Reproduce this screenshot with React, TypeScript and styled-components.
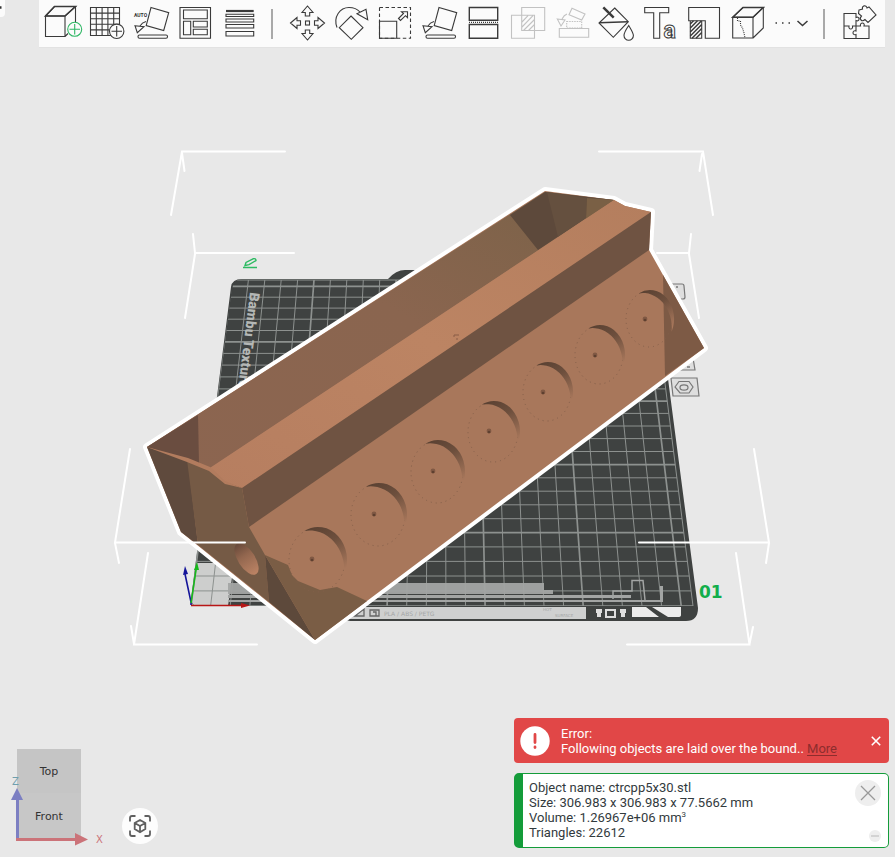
import React from "react";
import styled, { createGlobalStyle } from "styled-components";

const GlobalStyle = createGlobalStyle`
  *, *::before, *::after { box-sizing: border-box; }
  html, body { margin: 0; background: #e8e8e8; }
  body { font-family: Roboto, "Noto Sans", sans-serif; color: #323a3d; }
  button { font: inherit; color: inherit; background: none; border: 0; padding: 0; cursor: pointer; }
`;

const Workspace = styled.div`
  display: grid;
  grid-template-columns: minmax(0, 1fr);
  grid-template-rows: auto minmax(0, 1fr);
  height: 100vh;
  overflow: hidden;
  background: #e8e8e8;
`;

const Scene = styled.svg`
  grid-area: 1 / 1 / 3 / 2;
  width: 100%;
  height: 100vh;
  display: block;
`;

const TopRow = styled.header`
  grid-area: 1 / 1 / 2 / 2;
  display: flex;
  align-items: flex-start;
  justify-content: space-between;
  gap: 34px;
  padding-right: 10px;
`;

const SideTab = styled.div`
  flex: none;
  width: 5px;
  height: 17px;
  overflow: hidden;
  background: #fbfbfb;
  border-radius: 0 0 4px 0;
`;

const Toolbar = styled.nav`
  flex: 1;
  display: flex;
  align-items: flex-start;
  height: 48px;
  padding: 0 2px;
  background: #fbfbfb;
  border-bottom: 1px solid #e2e2e2;
`;

const ToolButton = styled.button<{ $wide?: boolean }>`
  flex: none;
  display: grid;
  place-items: center;
  width: ${(p) => (p.$wide ? 46 : 44)}px;
  height: 46px;
  &:disabled { cursor: default; }
`;

const ToolIcon = styled.svg<{ $muted?: boolean }>`
  width: 36px;
  height: 36px;
  overflow: visible;
  fill: none;
  stroke: ${(p) => (p.$muted ? "#c2c2c2" : "#3a3a3a")};
  stroke-width: 1.1;
`;

const Divider = styled.span<{ $end?: boolean }>`
  flex: none;
  align-self: center;
  width: 2px;
  height: 30px;
  margin: 0 12px 0 ${(p) => (p.$end ? 8 : 10)}px;
  background: #a9a9a9;
`;

const BottomRow = styled.section`
  grid-area: 2 / 1 / 3 / 2;
  align-self: end;
  display: flex;
  align-items: flex-end;
  justify-content: space-between;
  gap: 16px;
  padding: 0 6px 9px 10px;
`;

const ViewControls = styled.div`
  display: flex;
  align-items: flex-end;
  gap: 12px;
`;

const NavCube = styled.svg`
  display: block;
  width: 100px;
  height: 104px;
`;

const FitButton = styled.button`
  display: grid;
  place-items: center;
  width: 36px;
  height: 36px;
  margin-bottom: 4px;
  border-radius: 50%;
  background: #fdfdfd;
  svg { width: 22px; height: 22px; fill: none; stroke: #5f5f5f; stroke-width: 1.8; }
`;

const Notices = styled.div`
  flex: 0 1 375px;
  display: flex;
  flex-direction: column;
  gap: 10px;
  font-size: 13px;
  line-height: 15px;
`;

const ErrorNotice = styled.div`
  display: flex;
  align-items: center;
  height: 45px;
  padding: 0 7px 0 6px;
  gap: 11px;
  border-radius: 4px;
  color: #fff;
  background: #e14747;
`;

const Badge = styled.svg`
  flex: none;
  width: 30px;
  height: 30px;
`;

const NoticeText = styled.p`
  flex: 1;
  margin: 0;
  white-space: nowrap;
`;

const MoreLink = styled.a`
  color: #8d2d2d;
  text-underline-offset: 2px;
`;

const CloseButton = styled.button`
  display: grid;
  place-items: center;
  width: 12px;
  height: 12px;
  svg { width: 10px; height: 10px; stroke: #fff; stroke-width: 1.6; }
`;

const ObjectNotice = styled.div`
  display: flex;
  justify-content: space-between;
  height: 75px;
  padding: 6px 7px 5px 6px;
  border: 1px solid #149c3a;
  border-left-width: 9px;
  border-radius: 5px;
  background: #fff;
`;

const ObjectFacts = styled.div`
  white-space: nowrap;
`;

const Cubed = styled.sup`
  font-size: 8px;
  line-height: 1px;
`;

const NoticeActions = styled.div`
  display: flex;
  flex-direction: column;
  align-items: flex-end;
  justify-content: space-between;
`;

const RoundButton = styled.button<{ $size: number }>`
  display: grid;
  place-items: center;
  width: ${(p) => p.$size}px;
  height: ${(p) => p.$size}px;
  border-radius: 50%;
  background: #eee;
  svg { width: 100%; height: 100%; stroke: ${(p) => (p.$size > 20 ? "#999" : "#c4c4c4")}; stroke-width: 1.3; }
`;

type Tool = { name: string; muted?: boolean; art: React.ReactNode };

const tiltedPlate = (
  <>
    <path d="M18 2.5 35.7 7.7 30.7 25.5 13.2 20.5Z" />
    <rect x="5" y="30" width="29.5" height="3.2" rx="1.5" />
    <path d="M2 20.7 11 21.7 4.3 27.7ZM7 21Q9 17.500 13 16.500" />
  </>
);

const importTools: Tool[] = [
  {
    name: "Add",
    art: (
      <>
        <path d="M.5 11H20V31.500H.5ZM.5 11 9.500 1.500H30.500L20 11M30.500 1.500V17M20 31.500 23 28.500" />
        <path d="M.5 11 9.500 1.500H30.500L20 11Z" strokeWidth="1.500" />
        <circle cx="29.700" cy="24.300" r="7" stroke="#2fb765" fill="#fbfbfb" />
        <path d="M24.500 24.300H35M29.700 19V29.500" stroke="#2fb765" />
      </>
    ),
  },
  {
    name: "Add plate",
    art: (
      <>
        <path d="M1.500 2.500H30.500V30.500H1.500ZM7.300 2.500V30.500M13.100 2.500V30.500M18.900 2.500V30.500M24.700 2.500V30.500M1.500 8.100H30.500M1.500 13.700H30.500M1.500 19.300H30.500M1.500 24.900H30.500" />
        <circle cx="27.700" cy="26.300" r="7.200" fill="#fbfbfb" />
        <path d="M22.500 26.300H33M27.700 21V31.500" />
      </>
    ),
  },
  {
    name: "Auto orient",
    art: (
      <>
        {tiltedPlate}
        <text x="1" y="12" fontSize="5" fontWeight="700" fontFamily="Roboto" fill="#333" stroke="none">AUTO</text>
      </>
    ),
  },
  {
    name: "Arrange",
    art: <path d="M3 2.500H33.500V33.300H3ZM6.500 5H30.300V13.700H6.500ZM6.500 16.300H13.700V29.700H6.500ZM16.300 16.300H30.300V22H16.300ZM16.300 24.300H30.300V29.700H16.300Z" />,
  },
  {
    name: "Variable layer height",
    art: (
      <>
        <path d="M5 6H32.700" strokeWidth="2.200" />
        <path d="M5 9.300H32.700V11.500H5ZM5 14H32.700V17H5ZM5 19.500H32.700V23H5ZM5 26.500H32.700V31H5Z" />
      </>
    ),
  },
];

const arrowUp = "M18.500 1 24 7.500H20.700V11H16.300V7.500H13Z";

const editTools: Tool[] = [
  {
    name: "Move",
    art: (
      <>
        {[0, 90, 180, 270].map((a) => (
          <path key={a} d={arrowUp} transform={`rotate(${a} 18.500 18)`} />
        ))}
        <rect x="16.500" y="16" width="4" height="4" />
      </>
    ),
  },
  {
    name: "Rotate",
    art: <path d="M18 11 30 22.700 18.300 34.300 6.300 22.700ZM4 22.500C0 12 7 2.500 16 2.500Q23 2.500 27 7M24 8.700 33 4.300 34.700 14.700Z" />,
  },
  {
    name: "Scale",
    art: (
      <>
        <path d="M2.500 2.500H33.500V33.300H2.500Z" strokeDasharray="3.500 2.500" />
        <path d="M2.500 16.300H19.700V33.300H2.500ZM21.500 13.500 26.500 8.500 24.500 6.700H30.500V12.700L28.500 10.700 23.500 15.500Z" />
      </>
    ),
  },
  { name: "Lay on face", art: tiltedPlate },
  {
    name: "Cut",
    art: (
      <>
        <path d="M4.300 2.500H32.700V15.300H4.300ZM4.300 19.500H32.700V33.300H4.300Z" strokeWidth="1.400" />
        <path d="M4 17.400H33" strokeDasharray="1 1" />
      </>
    ),
  },
  {
    name: "Mesh boolean",
    muted: true,
    art: <path d="M12.700 2.500H35.700V25.500H12.700ZM2.500 10.300H25.500V33.300H2.500ZM13 17 19 10.700M13 22 24 10.700M14.500 25.500 25.500 14.500M19.500 25.500 25.500 19.500" />,
  },
  {
    name: "Assemble",
    muted: true,
    art: (
      <>
        <path d="M19 3.300 32 9 28.700 15 16 9.700ZM6.300 23.500H35.700V32.300H6.300ZM4.300 14 12 15 8 21ZM9 14Q11 10 14 9" />
        <path d="M13.700 16.500H28.700V23H13.700Z" strokeDasharray="1.500 1" />
      </>
    ),
  },
  {
    name: "Color painting",
    art: (
      <>
        <path d="M17.700 3 31.300 16.700 16.300 32.300 2 18Z" />
        <path d="M2 17.700 31 16.700" strokeWidth="1.500" />
        <path d="M6.300 2.300 16.700 12.700" strokeWidth="2.500" />
        <path d="M31.700 20.500C28 26 27 28 27 30.500A4.700 4.700 0 0 0 36.400 30.500C36.400 28 35 26 31.700 20.500Z" fill="#fbfbfb" />
      </>
    ),
  },
  {
    name: "Text",
    art: (
      <>
        <path d="M3.700 2.500H27.700V7.700H18.700V33.300H12.700V7.700H3.700Z" />
        <text x="22.500" y="33" fontSize="23" fontWeight="700" fontFamily="Roboto" fill="#fbfbfb" strokeWidth="1">a</text>
      </>
    ),
  },
  {
    name: "Support painting",
    art: (
      <>
        <path d="M3.700 2.500H34.500V33.300H20.300V15.700H3.700ZM5.300 15.700H16.700V33.300H5.300Z" />
        <path d="M5.300 19 8.500 15.700M5.300 23 12.500 15.700M5.300 27 16.500 15.700M5.300 31 16.700 19.500M7 33.300 16.700 23.500M11 33.300 16.700 27.500" strokeWidth="1.400" />
      </>
    ),
  },
  {
    name: "Seam painting",
    art: (
      <>
        <path d="M3.700 12.300H24V33H3.700ZM3.700 12.300 14 2.500H34.300L24 12.300M34.300 2.500V23L24 33" />
        <path d="M3.700 12.300 14 2.500H34.300L24 12.300Z" strokeWidth="1.500" />
        <path d="M8.500 13V16H11.500V20L13.500 23 15 28 16 33" strokeDasharray="1 1" />
      </>
    ),
  },
];

const ToolItem = ({ tool }: { tool: Tool }) => (
  <ToolButton type="button" aria-label={tool.name} disabled={tool.muted}>
    <ToolIcon viewBox="0 0 36 36" $muted={tool.muted} aria-hidden="true">{tool.art}</ToolIcon>
  </ToolButton>
);

/* Projects a point of the 256 mm build plate (in cm) onto the view. */
const project = (x: number, y: number) => {
  const w = 1 + 0.00763 * y;
  return `${(442 + ((x - 12.8) * 19.61) / w).toFixed(1)} ${((606 - 10.6 * y) / w).toFixed(1)}`;
};
const PLATE = 25.6;
const steps = Array.from({ length: 26 }, (_, i) => i);
const gridPath = (bold: boolean) =>
  steps
    .filter((i) => (i % 5 === 0) === bold)
    .map((i) => `M${project(i, 0)}L${project(i, PLATE)}M${project(0, i)}L${project(PLATE, i)}`)
    .join("") + (bold ? "" : `M${project(0, PLATE)}L${project(PLATE, PLATE)}L${project(PLATE, 0)}`);

type Pocket = { x: number; y: number; rx: number; ry: number; dx: number; dy: number };

const pockets: Pocket[] = [
  { x: 318, y: 560, rx: 29, ry: 33, dx: 312, dy: 559 },
  { x: 379, y: 515, rx: 28, ry: 32, dx: 374, dy: 514 },
  { x: 438, y: 472, rx: 27, ry: 32, dx: 433, dy: 471 },
  { x: 494, y: 432, rx: 26, ry: 31, dx: 489, dy: 431 },
  { x: 548, y: 392, rx: 25, ry: 30, dx: 543, dy: 392 },
  { x: 600, y: 355, rx: 25, ry: 30, dx: 595, dy: 355 },
  { x: 650, y: 319, rx: 24, ry: 29, dx: 645, dy: 319 },
];

/* The shaded inner wall that shows on the upper right of a round pocket. */
const pocketWall = ({ x, y, rx, ry }: Pocket) => {
  const at = (deg: number) => {
    const t = (deg * Math.PI) / 180;
    return `${(x + rx * Math.cos(t)).toFixed(1)} ${(y + ry * Math.sin(t)).toFixed(1)}`;
  };
  return `M${at(-118)}A${rx} ${ry} 0 0 1 ${at(26)}A${rx * 1.2} ${ry * 1.2} 0 0 0 ${at(-118)}Z`;
};

const outline = "M545 191 614 200 625 206 651 212 649 250 704 348 315 640 181 532 147 447Z";

const PlateScene = () => (
  <Scene viewBox="0 0 895 857" role="img" aria-label="Build plate with ctrcpp5x30.stl">
    <defs>
      <linearGradient id="pocketShade" x1="0.2" y1="0" x2="0.7" y2="1">
        <stop offset="0" stopColor="#5b4233" />
        <stop offset=".4" stopColor="#6d4f3d" />
        <stop offset="1" stopColor="#a8775b" />
      </linearGradient>
      <linearGradient id="ridge" x1="0" y1="1" x2="1" y2="0">
        <stop offset="0" stopColor="#b67e60" />
        <stop offset=".5" stopColor="#bc8463" />
        <stop offset="1" stopColor="#b47e5e" />
      </linearGradient>
      <linearGradient id="cavity" x1="0" y1="1" x2="1" y2="0">
        <stop offset="0" stopColor="#8c6550" />
        <stop offset=".55" stopColor="#8a654f" />
        <stop offset=".85" stopColor="#7f634a" />
      </linearGradient>
      <linearGradient id="bore" x1="0" y1="0" x2="0" y2="1">
        <stop offset="0" stopColor="#67493a" />
        <stop offset=".4" stopColor="#93674f" />
        <stop offset="1" stopColor="#bd8465" />
      </linearGradient>
      <clipPath id="plateClip">
        <path d="M191 606V590L232 290Q233 279 242 279H654L698 606Z" />
      </clipPath>
    </defs>

    <path d="M191 600 231 287Q232 279 242 279H388Q396 270 405 270H500L520 279H647Q654 279 656 287L698 608Q698 621 686 621H350L280 606H197Q191 606 191 600Z" fill="#3f4241" />
    <path d="M197 563H234L228 606H197Q191 606 192 598Z" fill="#cdcecd" />
    <g clipPath="url(#plateClip)" fill="none" stroke="#8d918f">
      <path d={gridPath(false)} strokeWidth="1" />
      <path d={gridPath(true)} strokeWidth="1.7" />
    </g>
    <text fontFamily="Roboto" fontWeight="900" fontSize="14" fill="#b4b7b5" transform="translate(250 292) rotate(97)">Bambu Textured</text>
    <g fill="#a3a5a4">
      <path d="M228 583H544V590H553V594H228Z" opacity=".95" />
      <path d="M228 595H631V598H228ZM228 600H660V586H663V602H228Z" />
      <path d="M613 599V591H632V580.500H643L645 600" fill="none" stroke="#a3a5a4" strokeWidth="1.500" />
    </g>
    <path d="M330 607H586V619H340Z" fill="#cfd0d0" />
    <g fontFamily="DejaVu Sans" fontSize="6" fill="#a4a6a6">
      <text x="384" y="616">PLA  /  ABS  /  PETG</text>
      <text x="543" y="611" fontSize="4">HOT</text>
      <text x="555" y="617" fontSize="4">SURFACE</text>
    </g>
    <path d="M355 616 364 609V616ZM370 610H379V616H370ZM373 612H376V616" fill="none" stroke="#666" strokeWidth="1.300" />
    <path d="M596 609H602V613H601V617H597V613H596ZM620 609H626V613H625V617H621V613H620Z" fill="#dedede" />
    <rect x="606" y="610" width="9" height="7" fill="none" stroke="#dedede" strokeWidth="2" />
    <path d="M632 607H646L659 617H632ZM652 607H681V615Q681 617 678 617H668Z" fill="#ebebeb" />

    <g fill="#dedede" stroke="#777" strokeWidth="1.200">
      <path d="M669 284H682Q684 284 684 286L685 297Q685 299 683 299H669Z" />
      <path d="M679 358H693L695 370H679Z" />
      <path d="M671 378H697L699 396H673Z" />
      <path d="M675 387 679 381.500H689L693 387 689 393H680Z" />
      <ellipse cx="684" cy="387.500" rx="4" ry="2.700" />
    </g>
    <path d="M676 287H678M687 367H690" stroke="#777" strokeWidth="1.500" />
    <text x="699" y="598" fontFamily="DejaVu Sans" fontWeight="700" fontSize="17" fill="#12ae4b">01</text>
    <path d="M243 267.500H257M245 265.500 246 262.500 253 258.800Q256 258 256 260.500L249 264.700Z" fill="none" stroke="#2dbb62" strokeWidth="1.400" />

    <path d={outline} fill="#a8775b" stroke="#fff" strokeWidth="8" strokeLinejoin="round" />
    <path d={outline} fill="#a8775b" />
    <path d="M147 447 545 192 614 200 210 468Z" fill="url(#cavity)" />
    <path d="M147 447 198 415 199 464Z" fill="#6a4d40" />
    <path d="M545 192 510 215 538 250 586 218 614 200Z" fill="#5d493b" />
    <path d="M547 192 587 198 586 218 558 237Z" fill="#65503f" />
    <path d="M587 198 614 200 586 219Z" fill="#7a6045" />
    <path d="M614 200 625 206 651 212 242 488 225 482 210 468Z" fill="url(#ridge)" />
    <path d="M651 212 649 250 249 527 242 488Z" fill="#6f5342" />
    <path d="M663 275 704 348 665 376Z" fill="#7d5a45" />
    <path d="M147 447 188 460 198 545 181 532Z" fill="#5f4a3d" />
    <path d="M187 460 210 468 225 482 242 488 249 527 265 555 269 602 198 545Z" fill="#755a45" />
    <path d="M147 447 188 458 210 467 225 481 242 488 225 484 209 471 187 462Z" fill="#b27c5e" />
    <path d="M265 555 315 640 269 602Z" fill="#5d493b" />
    <path d="M265 555 288 565 292 575 298 581 320 590 337 587 367 601 315 640Z" fill="#7a5d45" />
    <ellipse cx="246.500" cy="559" rx="8.500" ry="18" transform="rotate(-33 246.500 559)" fill="url(#bore)" />

    {pockets.map((p) => (
      <g key={p.x}>
        <ellipse cx={p.x - 1} cy={p.y} rx={p.rx - 1} ry={p.ry - 1} fill="none" stroke="#84604b" strokeWidth="1" strokeDasharray="1 4" />
        <path d={pocketWall(p)} fill="url(#pocketShade)" />
        <circle cx={p.dx} cy={p.dy} r="2.400" fill="#805944" />
        <circle cx={p.dx} cy={p.dy + 1} r="1.300" fill="#5e4030" />
      </g>
    ))}
    <path d="M454 337V335H459M456 339H458" fill="none" stroke="#895d47" />

    <g fill="none" stroke="#fff" strokeWidth="2" strokeLinecap="round">
      <path d="M285 151.500H182L171 215M182 153 184.500 171M599 151.500H703L713 215M702 154 699.500 171" />
      <path d="M294 253H195L193 234M195 254 185 318M657 253H689L691 234M689 254 699 318" />
      <path d="M130 449 115 542.500H245M115 543 119 563M754 449 769 542.500H639M769 543 766 563" />
      <path d="M148 553 134 644.500H257M131 626 134 644M736 553 749.500 644.500H627M753 627 749.500 644" />
    </g>

    <g strokeWidth="1.600">
      <path d="M191 605V602L185 574" stroke="#15159a" fill="none" />
      <path d="M185 566 188 574 183 575Z" fill="#15159a" />
      <path d="M191 603 196 570" stroke="#16b81b" fill="none" />
      <path d="M197 562 199 570 194 570Z" fill="#16b81b" />
      <path d="M191 605.500H243" stroke="#b81616" fill="none" />
      <path d="M250 605.500 241 603V608Z" fill="#b81616" />
    </g>
  </Scene>
);

export default function App() {
  return (
    <>
      <GlobalStyle />
      <Workspace>
        <PlateScene />
        <TopRow>
          <SideTab>
            <svg width="5" height="17" aria-hidden="true">
              <path d="M0 7.500H1.500" stroke="#333" strokeWidth="2.500" />
            </svg>
          </SideTab>
          <Toolbar aria-label="Tools">
            {importTools.map((t) => <ToolItem key={t.name} tool={t} />)}
            <Divider />
            {editTools.map((t) => <ToolItem key={t.name} tool={t} />)}
            <ToolButton type="button" $wide aria-label="More tools">
              <ToolIcon viewBox="0 0 36 36" aria-hidden="true">
                <path d="M1.500 18H3M8 18H9.500M14.500 18H16" strokeWidth="1.500" />
                <path d="M23.500 16 28.500 20.500 33.500 16" strokeWidth="1.500" />
              </ToolIcon>
            </ToolButton>
            <Divider $end />
            <ToolButton type="button" aria-label="Assembly view">
              <ToolIcon viewBox="0 0 36 36" aria-hidden="true">
                <path d="M3 8.500H15V12.500C19 10.500 19 17.500 15 15.500V21H11.500C12.500 25 7 25 8 21H3ZM3 21V33.500H15V29.500C11 31 11 24.500 15 26V21M15 33.500H28V21H23C24.500 17 18.500 17 19.500 21H15M18 5 21.500 4C20.500 .5 25.500-.5 26 3L28 2 35 10 27 17.500 24 14.500C21 17.500 17.500 14 20.500 11L17.500 8.500Z" />
              </ToolIcon>
            </ToolButton>
          </Toolbar>
        </TopRow>

        <BottomRow>
          <ViewControls>
            <NavCube viewBox="10 744 100 104" role="img" aria-label="View cube">
              <rect x="17" y="749" width="64" height="90" fill="#c5c5c5" />
              <path d="M17 793H81V839H17Z" fill="#c7c7c7" />
              <g fontFamily="DejaVu Sans" fontSize="11" fill="#333" textAnchor="middle">
                <text x="49" y="775">Top</text>
                <text x="49" y="820">Front</text>
              </g>
              <path d="M17.500 839V798" stroke="#7c7fc2" strokeWidth="3" />
              <path d="M17 788 23 800H11Z" fill="#7c7fc2" />
              <path d="M16 839.500H77" stroke="#cb7379" strokeWidth="3" />
              <path d="M88 839.500 75 833V845.500Z" fill="#cb7379" />
              <text x="12" y="785" fontFamily="DejaVu Sans" fontSize="10" fill="#6f9fae">Z</text>
              <text x="96" y="843" fontFamily="DejaVu Sans" fontSize="10" fill="#cb7379">X</text>
            </NavCube>
            <FitButton type="button" aria-label="Fit view">
              <svg viewBox="0 0 22 22" aria-hidden="true">
                <path d="M1 6.500V3Q1 1 3 1H6.500M15.500 1H19Q21 1 21 3V6.500M21 15.500V19Q21 21 19 21H15.500M6.500 21H3Q1 21 1 19V15.500M11 5 16.300 8V14L11 17.200 5.700 14V8ZM5.700 8 11 11 16.300 8M11 11V17" />
              </svg>
            </FitButton>
          </ViewControls>

          <Notices>
            <ErrorNotice role="alert">
              <Badge viewBox="0 0 30 30" aria-hidden="true">
                <circle cx="15" cy="15" r="14.700" fill="#fff" />
                <path d="M15 8.500V16.500M15 21V21.500" stroke="#e14747" strokeWidth="2.800" strokeLinecap="round" />
              </Badge>
              <NoticeText>
                Error:<br />
                Following objects are laid over the bound.. <MoreLink href="#more">More</MoreLink>
              </NoticeText>
              <CloseButton type="button" aria-label="Dismiss error">
                <svg viewBox="0 0 10 10" aria-hidden="true"><path d="M.8.8 9.200 9.200M9.200.8.8 9.200" /></svg>
              </CloseButton>
            </ErrorNotice>
            <ObjectNotice role="status">
              <ObjectFacts>
                <div>Object name: ctrcpp5x30.stl</div>
                <div>Size: 306.983 x 306.983 x 77.5662 mm</div>
                <div>Volume: 1.26967e+06 mm<Cubed>3</Cubed></div>
                <div>Triangles: 22612</div>
              </ObjectFacts>
              <NoticeActions>
                <RoundButton type="button" $size={26} aria-label="Close">
                  <svg viewBox="0 0 26 26" aria-hidden="true"><path d="M6 6 20 20M20 6 6 20" /></svg>
                </RoundButton>
                <RoundButton type="button" $size={12} aria-label="Minimize">
                  <svg viewBox="0 0 12 12" aria-hidden="true"><path d="M2 6H10" /></svg>
                </RoundButton>
              </NoticeActions>
            </ObjectNotice>
          </Notices>
        </BottomRow>
      </Workspace>
    </>
  );
}
